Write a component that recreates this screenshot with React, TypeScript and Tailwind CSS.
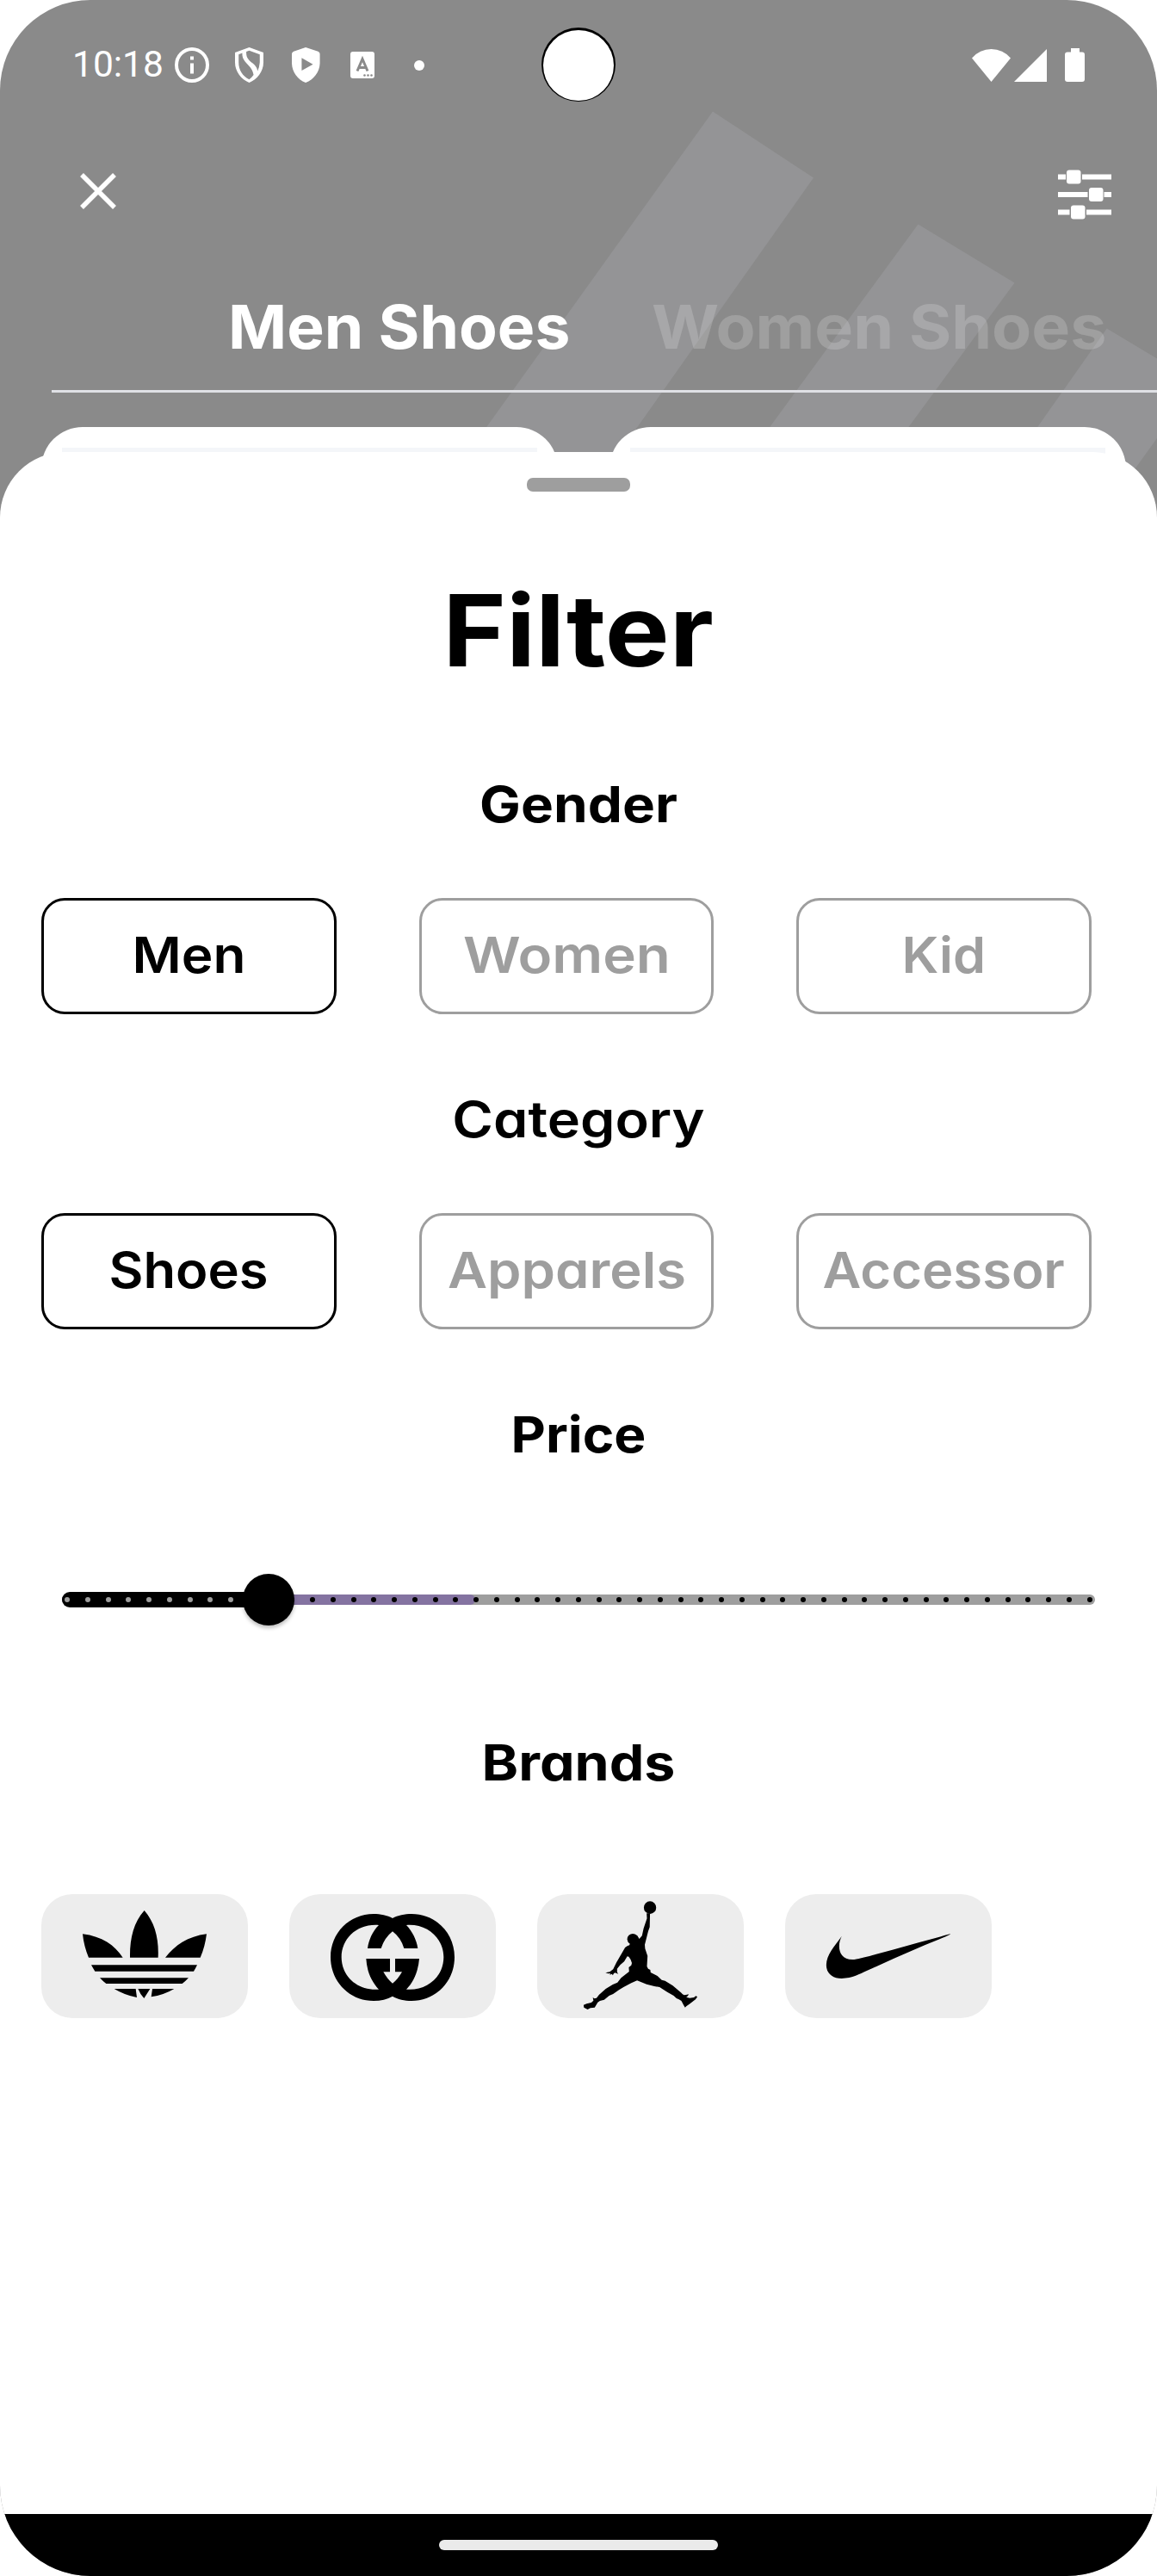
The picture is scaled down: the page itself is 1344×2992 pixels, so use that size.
import React from "react";

type Option = { label: string; stretch: string; active?: boolean };

const genders: Option[] = [
  { label: "Men", stretch: "scale-x-[1.074]", active: true },
  { label: "Women", stretch: "scale-x-[1.132]" },
  { label: "Kid", stretch: "scale-x-[1.055]" },
];

const categories: Option[] = [
  { label: "Shoes", stretch: "scale-x-[1.063]", active: true },
  { label: "Apparels", stretch: "scale-x-[1.095]" },
  { label: "Accessor", stretch: "scale-x-[1.064]" },
];

const STOPS = Array.from({ length: 51 }, (_, i) => i);

function StatusBar() {
  return (
    <div className="flex h-[151px] items-center pr-[84px] pl-[84px]">
      <span className="w-[119px] font-['Roboto',sans-serif] text-[42.500px] leading-none">10:18</span>
      <svg className="h-[41px] w-[40px]" viewBox="0 0 40 41" fill="none">
        <ellipse cx="20" cy="20.5" rx="18" ry="18.5" stroke="white" strokeWidth="4" />
        <path d="M18 10.500h4v4h-4zM18 18.500h4v12h-4z" fill="white" />
      </svg>
      <svg className="ml-[30px] h-[41px] w-[33px]" viewBox="636 165 78 124" preserveAspectRatio="none">
        <path
          fill="white"
          fillRule="evenodd"
          d="M675 165L714 183V218C714 250 697 278 675 289C653 278 636 250 636 218V183ZM646 190L656 185C654 220 683 225 687 262Q682 271 675 278C657 266 646 245 646 218ZM667 180L675 176L704 190V218Q703 235 698 248C695 215 665 220 667 180Z"
        />
      </svg>
      <svg className="ml-[33px] h-[41px] w-[33px]" viewBox="790 165 78 124" preserveAspectRatio="none">
        <path
          fill="white"
          fillRule="evenodd"
          d="M828 165L862 179Q867 182 867 188V222C866 252 850 279 828 289C806 279 791 252 790 222V188Q790 182 795 179ZM817 202V247L848 225Z"
        />
      </svg>
      <svg className="ml-[35px] h-[31px] w-[28px]" viewBox="0 0 28 31">
        <rect width="28" height="31" rx="3" fill="white" />
        <path d="M8 22.500L14 8.500L20 22.500M10 18.500h8" fill="none" stroke="#8a8a8a" strokeWidth="3" />
        <g fill="#8a8a8a">
          <circle cx="16.500" cy="27.500" r="1.300" />
          <circle cx="20.500" cy="27.500" r="1.300" />
          <circle cx="24.500" cy="27.500" r="1.300" />
        </g>
      </svg>
      <span className="ml-[46px] size-3 rounded-full bg-white" />
      <div className="ml-auto flex items-center">
        <svg className="h-[38px] w-[45px]" viewBox="0 0 45 38">
          <path d="M0 10.500Q9 0 22.500 0Q36 0 45 10.500L22.500 38Z" fill="white" />
        </svg>
        <svg className="ml-[4px] h-[38px] w-[38px]" viewBox="0 0 38 38">
          <path d="M0 38L38 0V38Z" fill="white" />
        </svg>
        <svg className="ml-[21px] h-[39px] w-[23px]" viewBox="0 0 23 39">
          <rect y="4.500" width="23" height="34.500" rx="3" fill="white" />
          <rect x="7" width="10" height="6" fill="white" />
        </svg>
      </div>
    </div>
  );
}

function Toolbar() {
  return (
    <div className="flex h-[149px] items-center justify-between pr-[53px] pl-[93px]">
      <svg className="mb-[7px] size-[42px]" viewBox="0 0 42 42">
        <path d="M2 2L40 40M40 2L2 40" stroke="white" strokeWidth="5.500" />
      </svg>
      <svg className="h-[58px] w-[62px]" viewBox="0 0 62 58" fill="white">
        <path d="M0 5.500h9v6H0zM28 5.500h34v6H28zM0 26h34.500v6H0zM53.500 26H62v6h-8.500zM0 46.500h13.500v6H0zM33 46.500h29v6H33z" />
        <rect x="10" y="0.500" width="16.500" height="16" rx="3" />
        <rect x="36" y="21" width="16.500" height="16" rx="3" />
        <rect x="15" y="41.500" width="16.500" height="16" rx="3" />
      </svg>
    </div>
  );
}

function Stripes() {
  return (
    <svg className="absolute inset-0 h-[600px] w-[1344px]" viewBox="0 0 1344 600" fill="#949496">
      <path d="M828 129.500L945 206.500L691 566H515Z" />
      <path d="M1066.500 260.500L1178.500 328.500L1004 566H843Z" />
      <path d="M1285.700 381.500L1344 416.500V509L1303 566H1156Z" />
    </svg>
  );
}

function ProductCard() {
  return (
    <div className="h-[90px] w-[600px] rounded-t-[48px] bg-white px-6 pt-6">
      <div className="h-[60px] bg-[#f4f6f9]" />
    </div>
  );
}

function Heading({ className, children }: { className: string; children: string }) {
  return (
    <h2 className={"flex h-[84px] items-center justify-center pt-[2px] text-[57.8px] leading-none " + className}>
      {children}
    </h2>
  );
}

function Options({ items }: { items: Option[] }) {
  return (
    <div className="mt-[67px] grid w-[1220px] grid-cols-3 gap-24">
      {items.map((o) => (
        <button
          key={o.label}
          className={
            "flex h-[135px] items-center justify-center rounded-[27px] border-[3px] pb-[1px] text-[57.8px] leading-none font-semibold " +
            (o.active ? "border-black text-black" : "border-[#9e9e9e] text-[#9e9e9e]")
          }
        >
          <span className={"inline-block " + o.stretch}>{o.label}</span>
        </button>
      ))}
    </div>
  );
}

function PriceSlider() {
  return (
    <div className="relative mx-6 mt-[120px] flex h-[60px] items-center">
      <div className="h-3 w-full rounded-full bg-[#9e9e9e]" />
      <div className="absolute left-0 h-3 w-[480px] rounded-full bg-[#8473a1]" />
      <div className="absolute left-0 h-[18px] w-[240px] rounded-full bg-black" />
      <div className="absolute inset-x-[3px] flex justify-between">
        {STOPS.map((i) => (
          <span key={i} className={"size-[6px] rounded-full " + (i < 10 ? "bg-[#9e9e9e]" : "bg-black")} />
        ))}
      </div>
      <div className="absolute left-[210px] size-[60px] rounded-full bg-black shadow-[0_3px_4px_rgba(0,0,0,0.25)]" />
    </div>
  );
}

function BrandCard({ viewBox, children }: { viewBox: string; children: React.ReactNode }) {
  return (
    <div className="h-36 w-60 overflow-hidden rounded-[36px] bg-[#ededed]">
      <svg className="size-full" viewBox={viewBox} preserveAspectRatio="none">
        {children}
      </svg>
    </div>
  );
}

function Brands() {
  return (
    <div className="mt-[111px] flex gap-12">
      <BrandCard viewBox="24 30 720 432">
        <path d="M383 87C420 130 434 185 431 251H333C332 185 345 130 383 87ZM168 169C235 177 280 208 308 251H189C178 225 171 198 168 169ZM600 169C535 177 490 208 456 251H578C590 225 596 198 600 169ZM198 277H567Q562 288 555 299H211Q204 288 198 277ZM228 322H537Q527 333 515 342H250Q238 333 228 322ZM278 360H353L357 390Q314 382 278 360ZM361 360H403L382 393Q369 380 361 360ZM411 360H487Q450 382 407 388Z" />
      </BrandCard>
      <BrandCard viewBox="18 30 720 432">
        <path
          fillRule="evenodd"
          d="M378 114C360 104 335 99 312 99C228 99 162 165 162 250C162 335 228 402 312 402C337 402 360 396 378 386C396 396 420 402 444 402C528 402 594 335 594 250C594 165 528 99 444 99C421 99 396 104 378 114ZM330 138C255 132 200 185 200 250C200 316 256 368 330 362C302 332 288 295 286 255H369V301H346Q361 328 378 341Q396 328 411 301H387V255H471C468 295 453 335 426 362C500 368 556 316 556 250C556 185 500 132 426 138C447 160 462 190 466 219H418Q407 182 378 160Q350 182 338 219H291C295 190 308 160 330 138Z"
        />
      </BrandCard>
      <BrandCard viewBox="39 30 672 432">
        <ellipse cx="406" cy="77" rx="20" ry="22" />
        <ellipse cx="350" cy="187" rx="18" ry="19" />
        <path d="M395 97L406 97L405 145L400 160L394 185L389 206L390 220L398 245L396 282L400 290L407 294L408 303L430 315L444 329L455 332L480 349L508 374L512 379L517 382L523 381L532 379L529 385L524 389L535 392L549 390L555 385L560 388L554 397L534 413L524 421L520 425L515 416L508 402L500 397L492 393L483 384L462 371L437 354L420 351L395 344L364 331L345 340L320 354L305 364L286 378L273 384L257 398L243 402L236 407L226 425L212 427L203 432L191 425L190 416L200 412L215 408L222 401L220 390L225 394L232 392L240 381L262 360L285 345L300 338L312 322L338 300L337 285L345 278L347 270L343 258L337 248L332 247L322 265L309 277L299 290L299 302L303 308L292 304L288 307L285 313L282 308L275 311L277 306L270 307L261 304L275 301L286 292L297 268L310 244L325 216L332 211L339 208L341 202L350 185L364 174L371 186L380 175L385 150L396 115Z" />
      </BrandCard>
      <BrandCard viewBox="846 30 672 432">
        <path d="M1030 177C1015 207 1018 258 1065 258C1080 258 1105 250 1130 243L1195 224L1280 199L1335 183Q1368 173 1383 169L1383 170Q1370 177 1345 188L1300 208L1200 254L1110 298C1090 308 1065 323 1030 324C1000 324 980 306 980 277C981 240 1005 215 1030 177Z" />
      </BrandCard>
    </div>
  );
}

export default function App() {
  return (
    <div className="bg-white font-['Inter',sans-serif] [font-feature-settings:'cv11']">
      <div className="relative flex h-[2992px] w-[1344px] flex-col overflow-hidden rounded-[105px] bg-[#8a8a8a]">
        <Stripes />
        <div className="absolute top-[32px] left-[629px] flex size-[86px] items-end justify-center rounded-full bg-black pb-[1px]">
          <div className="size-[82px] rounded-full bg-white" />
        </div>

        <header className="relative flex flex-col text-white">
          <StatusBar />
          <Toolbar />
          <div className="flex h-[153px] gap-[100px] pt-[8px] pl-[268px] text-[70.2px] leading-none font-bold whitespace-nowrap">
            <div className="flex w-[391px] items-center justify-center">
              <span className="inline-block scale-x-[1.042]">Men Shoes</span>
            </div>
            <div className="flex w-[525px] items-center justify-center text-white/18">
              <span className="inline-block scale-x-[1.073]">Women Shoes</span>
            </div>
          </div>
          <div className="ml-[60px] h-[3px] bg-[#dfe0e5]" />
          <div className="mt-10 -mb-[61px] flex gap-[60px] pl-12">
            <ProductCard />
            <ProductCard />
          </div>
        </header>

        <main className="relative flex flex-1 flex-col rounded-t-[76px] bg-white px-12 pt-[30px] text-black">
          <div className="h-4 w-[120px] self-center rounded-[7px] bg-[#9e9e9e]" />
          <h1 className="mt-[92px] flex h-[140px] items-center justify-center text-[115.5px] leading-none font-bold">
            <span className="inline-block scale-x-[1.089]">Filter</span>
          </h1>
          <Heading className="mt-[89px] scale-x-[1.104] font-bold">Gender</Heading>
          <Options items={genders} />
          <Heading className="mt-[80px] scale-x-[1.12] font-semibold">Category</Heading>
          <Options items={categories} />
          <Heading className="mt-[80px] scale-x-[1.078] font-bold">Price</Heading>
          <PriceSlider />
          <Heading className="mt-[117px] scale-x-[1.115] font-bold">Brands</Heading>
          <Brands />
        </main>

        <nav className="relative flex h-[72px] items-center justify-center bg-black">
          <div className="h-3 w-[324px] rounded-full bg-[#eaeaea]" />
        </nav>
      </div>
    </div>
  );
}
